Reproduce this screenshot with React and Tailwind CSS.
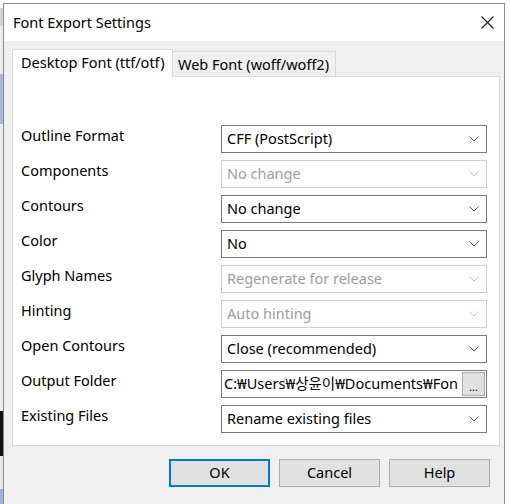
import React from "react";

const font = { fontFamily: '"Noto Sans", "Noto Sans CJK KR", sans-serif' };

const Chevron = ({ disabled }) => (
  <svg width="10" height="6" viewBox="0 0 10 6" className="shrink-0">
    <path
      d="M0.5 0.5L5 5L9.5 0.5"
      fill="none"
      stroke={disabled ? "#c4c4c4" : "#5a5a5a"}
      strokeWidth="1"
    />
  </svg>
);

const Select = ({ value, disabled }) => (
  <div
    className={`h-[28px] w-[266px] flex items-center justify-between bg-white border pl-[5px] pr-[7px] ${
      disabled ? "border-[#cccccc] text-[#9d9d9d]" : "border-[#7a7a7a] text-black"
    }`}
  >
    <span className="whitespace-nowrap">{value}</span>
    <Chevron disabled={disabled} />
  </div>
);

const rows = [
  { label: "Outline Format", value: "CFF (PostScript)" },
  { label: "Components", value: "No change", disabled: true },
  { label: "Contours", value: "No change" },
  { label: "Color", value: "No" },
  { label: "Glyph Names", value: "Regenerate for release", disabled: true },
  { label: "Hinting", value: "Auto hinting", disabled: true },
  { label: "Open Contours", value: "Close (recommended)" },
  { label: "Output Folder", folder: true },
  { label: "Existing Files", value: "Rename existing files" },
];

const Button = ({ children, primary }) => (
  <div
    className={`w-[101px] h-[28px] flex items-center justify-center bg-[#e1e1e1] ${
      primary ? "border-2 border-[#0078d7]" : "border border-[#adadad]"
    }`}
  >
    {children}
  </div>
);

export default function App() {
  return (
    <div
      className="w-[509px] h-[504px] overflow-hidden flex bg-white text-[14.5px] text-black"
      style={font}
    >
      {/* window behind the dialog */}
      <div className="w-[3px] flex flex-col shrink-0">
        <div className="h-[8px] bg-white" />
        <div className="h-[18px] bg-[#d4d4d4]" />
        <div className="h-[48px] bg-[#ececec]" />
        <div className="h-[50px] bg-[#a9b9d9]" />
        <div className="h-[287px] bg-[#ececec]" />
        <div className="h-[45px] bg-[#111]" />
        <div className="h-[33px] bg-[#e6e6e6]" />
        <div className="flex-1 bg-[#9fb3d9]" />
      </div>

      <div className="mt-[3px] w-[502px] shrink-0 flex flex-col border-l border-t border-r border-[#8a8a8a] bg-[#f0f0f0]">
        {/* title bar */}
        <div className="h-[37px] bg-white flex items-center justify-between pl-[9px] pr-[10px]">
          <span>Font Export Settings</span>
          <svg width="13" height="13" viewBox="0 0 13 13">
            <path d="M0.5 0.5L12.5 12.5M12.5 0.5L0.5 12.5" stroke="#222" strokeWidth="1.1" />
          </svg>
        </div>

        <div className="pl-[8px] pt-[8px]">
          {/* tabs */}
          <div className="flex items-end relative z-10">
            <div className="h-[28px] w-[161px] bg-white border border-b-0 border-[#d9d9d9] flex items-center pl-[8px] -mb-px pb-[1px]">
              Desktop Font (ttf/otf)
            </div>
            <div className="h-[25px] w-[163px] border border-l-0 border-b-0 border-[#d9d9d9] flex items-center pl-[5px] pt-[2px]">
              Web Font (woff/woff2)
            </div>
          </div>

          {/* panel */}
          <div className="w-[488px] h-[370px] bg-white border border-[#d9d9d9] pt-[48px] pl-[8px] flex flex-col gap-[7px]">
            {rows.map((r) => (
              <div key={r.label} className="flex items-start h-[28px]">
                <div className="w-[200px] leading-[20px]">{r.label}</div>
                {r.folder ? (
                  <div className="h-[28px] w-[266px] flex items-center bg-white border border-[#7a7a7a] pl-[2px] pr-[1px]">
                    <span className="flex-1 min-w-0 whitespace-nowrap overflow-hidden">
                      C:₩Users₩상윤이₩Documents₩Fon
                    </span>
                    <div className="w-[23px] h-[24px] shrink-0 bg-[#e1e1e1] border border-[#adadad] flex items-end justify-center text-[11px] leading-[16px]">
                      ...
                    </div>
                  </div>
                ) : (
                  <Select value={r.value} disabled={r.disabled} />
                )}
              </div>
            ))}
          </div>

          {/* buttons */}
          <div className="flex gap-[9px] pl-[157px] pt-[13px]">
            <Button primary>OK</Button>
            <Button>Cancel</Button>
            <Button>Help</Button>
          </div>
        </div>
      </div>
      <div className="flex-1 bg-white" />
    </div>
  );
}
